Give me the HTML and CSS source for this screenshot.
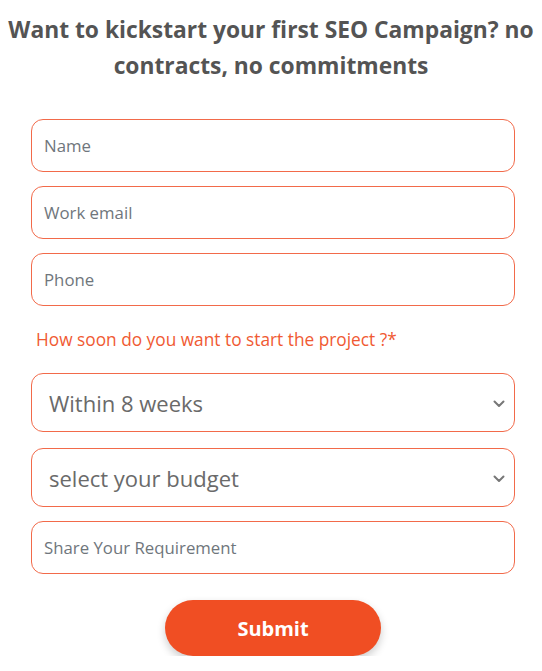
FILE: index.html
```html
<!DOCTYPE html>
<html>
<head>
<meta charset="utf-8">
<link rel="stylesheet" href="styles.css">
</head>
<body>
<div class="wrap">
  <h2 class="title">Want to kickstart your first SEO Campaign? no contracts, no commitments</h2>
  <form class="form">
    <div class="field">Name</div>
    <div class="field">Work email</div>
    <div class="field">Phone</div>
    <div class="label">How soon do you want to start the project ?*</div>
    <div class="select">
      <span>Within 8 weeks</span>
      <svg class="chev" width="12" height="8" viewBox="0 0 12 8"><path d="M1.5 1.5 L6 6 L10.5 1.5" fill="none" stroke="#777" stroke-width="2" stroke-linecap="round" stroke-linejoin="round"/></svg>
    </div>
    <div class="select last">
      <span>select your budget</span>
      <svg class="chev" width="12" height="8" viewBox="0 0 12 8"><path d="M1.5 1.5 L6 6 L10.5 1.5" fill="none" stroke="#777" stroke-width="2" stroke-linecap="round" stroke-linejoin="round"/></svg>
    </div>
    <div class="field">Share Your Requirement</div>
    <div class="actions"><button type="button" class="submit">Submit</button></div>
  </form>
</div>
</body>
</html>
```
FILE: styles.css
```css
* { box-sizing: border-box; }
body { margin: 0; background: #fff; font-family: "Open Sans", "Noto Sans", sans-serif; }
.wrap { width: 542px; }
.title {
  margin: 12px 0 0;
  text-align: center;
  font-size: 22.8px;
  line-height: 36px;
  font-weight: 700;
  color: #545454;
  padding: 0 2px;
}
.form {
  margin: 35px 27px 0 31px;
  display: flex;
  flex-direction: column;
}
.field {
  height: 53px;
  border: 1.5px solid #f26a4a;
  border-radius: 12px;
  padding: 0 12px;
  display: flex;
  align-items: center;
  font-size: 16.8px;
  color: #6f767c;
  margin-bottom: 14px;
}
.label {
  font-size: 17.3px;
  color: #f05a33;
  margin: 9px 0 0 5px;
  line-height: 22px;
  margin-bottom: 22px;
}
.select {
  height: 59px;
  border: 1.5px solid #f26a4a;
  border-radius: 12px;
  padding: 0 9px 0 17px;
  display: flex;
  align-items: center;
  justify-content: space-between;
  font-size: 22px;
  color: #6a6a6a;
  margin-bottom: 16px;
}
.select.last { margin-bottom: 14px; }
.chev { margin-top: 2px; }
.actions { display: flex; justify-content: center; margin-top: 12px; }
.submit {
  width: 216px;
  height: 56px;
  border: none;
  border-radius: 28px;
  background: #f04e23;
  color: #fff;
  font-family: "Open Sans", sans-serif;
  font-weight: 700;
  font-size: 20px;
  box-shadow: 0 4px 8px rgba(0,0,0,0.2);
}
```
